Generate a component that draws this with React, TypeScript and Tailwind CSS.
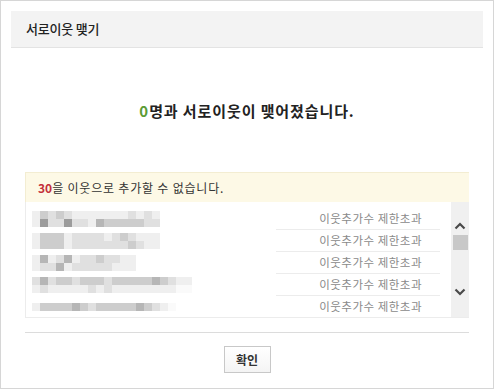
import React from "react";

const shadeClass: Record<string, string> = {
  "0": "bg-[#fafafa]",
  "1": "bg-[#efefef]",
  "2": "bg-[#e0e0e0]",
  "3": "bg-[#cdcdcd]",
  "4": "bg-[#b6b6b6]",
  "5": "bg-[#9c9c9c]",
};

// pixelated (hidden) friend names
const mosaics: string[][] = [
  ["1323211111112121", "1522522143333322"],
  ["1333122221232111", "1333122222223211"],
  ["1412412232211", "1224122222111"],
  ["24233233323333343211", "12111112121111111100"],
  ["133334323333343210"],
];

function Mosaic({ lines }: { lines: string[] }) {
  return (
    <div className="flex flex-col">
      {lines.map((line, i) => (
        <div key={i} className="flex">
          {line.split("").map((c, j) => (
            <div key={j} className={`w-[8px] h-[8px] ${shadeClass[c]}`} />
          ))}
        </div>
      ))}
    </div>
  );
}

function Chevron({ up }: { up?: boolean }) {
  return (
    <svg width="12" height="8" viewBox="0 0 12 8" fill="none">
      <path
        d={up ? "M1.5 6.5 L6 2 L10.5 6.5" : "M1.5 1.5 L6 6 L10.5 1.5"}
        stroke="#4a4a4a"
        strokeWidth="2.2"
      />
    </svg>
  );
}

export default function App() {
  return (
    <div className="w-[494px] h-[389px] border border-[#d6d6d6] bg-white px-[10px] pt-[10px] font-['Noto_Sans_CJK_KR',sans-serif] text-[#333]">
      <div className="h-[37px] bg-[#f3f3f3] border-b border-[#e3e3e3] pl-[15px] flex items-center text-[13px] font-medium tracking-[-0.2px] text-[#222]">
        서로이웃 맺기
      </div>

      <div className="mx-[14px]">
        <div className="h-[124px] pt-[53px] text-center text-[15px] leading-[20px] font-bold tracking-[0.9px] text-[#222]">
          <span className="text-[#5c9c35]">0</span>명과 서로이웃이 맺어졌습니다.
        </div>

        <div className="h-[30px] bg-[#fdf9e6] border-t border-l border-[#f3edd2] pl-[12px] flex items-center text-[12px] tracking-[0.8px] text-[#333]">
          <span className="font-bold text-[#c3303a] tracking-normal">30</span>을 이웃으로 추가할 수 없습니다.
        </div>

        <div className="h-[116px] flex border-b border-l border-[#ececec]">
          <div className="flex-1 pt-[6px] pr-[11px]">
            {mosaics.map((m, i) => (
              <div key={i} className="h-[22px] flex">
                <div className="w-[250px] pl-[6px] flex items-center">
                  <Mosaic lines={m} />
                </div>
                <div
                  className={`flex-1 flex items-center justify-end pr-[18px] text-[11.5px] tracking-[0.5px] text-[#8a8a8a] ${
                    i < mosaics.length - 1 ? "border-b border-[#ececec]" : ""
                  }`}
                >
                  이웃추가수 제한초과
                </div>
              </div>
            ))}
          </div>
          <div className="w-[18px] bg-[#f0f0f0] flex flex-col items-center">
            <div className="mt-[20px]">
              <Chevron up />
            </div>
            <div className="mt-[5px] w-[15px] h-[15px] bg-[#c8c8c8]" />
            <div className="mt-[38px]">
              <Chevron />
            </div>
          </div>
        </div>

        <div className="mt-[14px] h-px bg-[#dcdcdc]" />

        <div className="mt-[13px] flex justify-center">
          <button className="w-[47px] h-[27px] border border-[#c8c8c8] bg-gradient-to-b from-white to-[#f4f4f4] text-[12px] font-bold text-[#333]">
            확인
          </button>
        </div>
      </div>
    </div>
  );
}
